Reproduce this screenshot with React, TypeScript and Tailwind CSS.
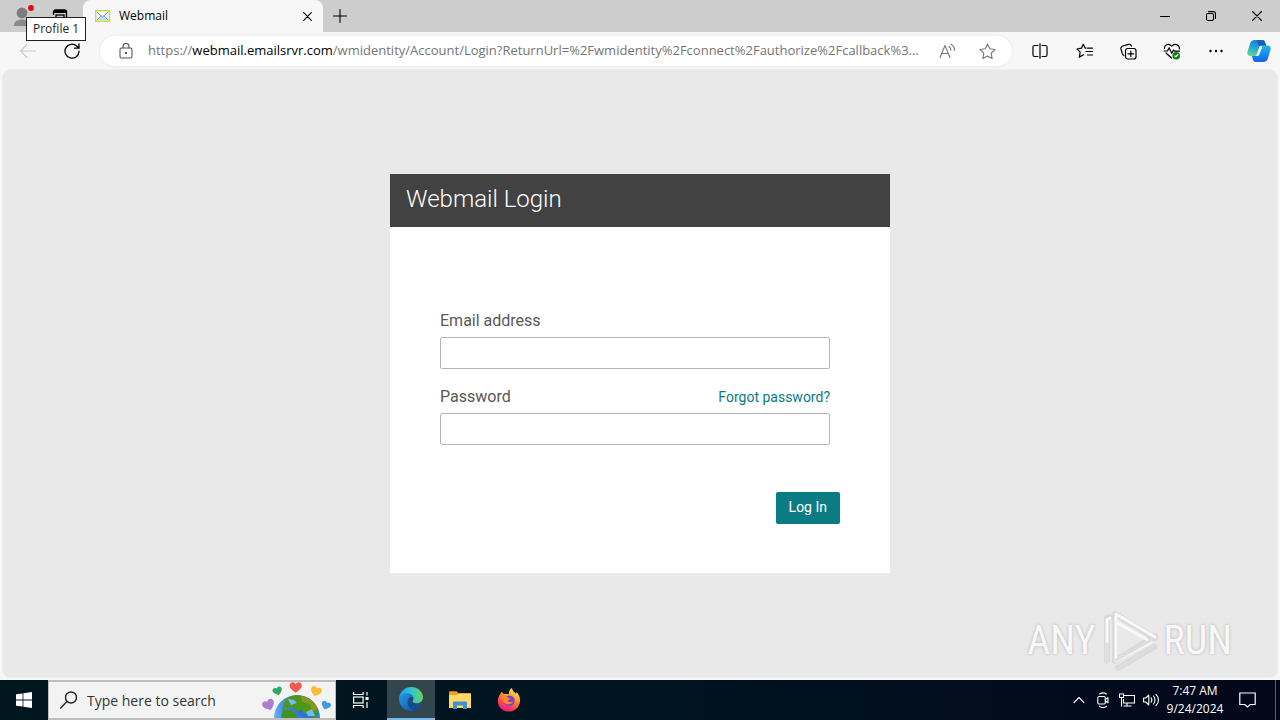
import type { ReactNode } from "react";

function IconButton({ label, className, children }: { label: string; className: string; children: ReactNode }) {
  return (
    <button type="button" aria-label={label} className={`flex shrink-0 items-center justify-center ${className}`}>
      {children}
    </button>
  );
}

const line = { fill: "none", stroke: "currentColor", strokeWidth: 1.1, strokeLinecap: "round", strokeLinejoin: "round" } as const;

function TabStrip() {
  return (
    <header className="relative flex h-8 shrink-0 bg-[#cdcdcd]">
      <IconButton label="Profile 1" className="w-11">
        <svg width="28" height="24" viewBox="-3 0 28 24">
          <circle cx="11" cy="9" r="5.400" fill="#7d7d7d" />
          <path d="M3 22c0-4.500 3-6.500 8-6.500s8 2 8 6.500z" fill="#8b8b8b" />
          <circle cx="20" cy="4" r="2.900" fill="#e30613" />
        </svg>
      </IconButton>
      <IconButton label="Workspaces" className="w-8">
        <svg width="16" height="16" viewBox="0 0 16 16" fill="none" stroke="#000">
          <path d="M1.500 7V4a2 2 0 0 1 2-2h9a2 2 0 0 1 2 2v9" strokeWidth="1.300" />
          <path d="M2 3.500h12" strokeWidth="3" />
          <rect x="4" y="7" width="8" height="7" strokeWidth="1.300" />
        </svg>
      </IconButton>
      <div className="ml-[7px] flex w-60 items-center rounded-t-lg bg-[#f7f7f7] pr-2 pl-3">
        <svg className="shrink-0" width="15" height="12" viewBox="0 0 15 12">
          <rect x=".7" y=".7" width="13.600" height="10.600" fill="#f4f9ff" stroke="#c9db35" strokeWidth="1.400" />
          <path d="M2 10.300 5.700 6h3.600l3.700 4.300z" fill="#bcdcf5" />
          <path d="M2 2l5.500 5L13 2M2 10l4-4.300M13 10 9 5.700" fill="none" stroke="#7899c4" />
        </svg>
        <span className="ml-[9px] flex-1 text-[12px]">Webmail</span>
        <IconButton label="Close tab" className="size-4">
          <svg width="9" height="9" viewBox="0 0 9 9" {...line}>
            <path d="m.7.700 7.600 7.600m0-7.600L.7 8.300" />
          </svg>
        </IconButton>
      </div>
      <IconButton label="New tab" className="w-[34px]">
        <svg width="14" height="14" viewBox="0 0 14 14" {...line}>
          <path d="M7 .5v13M.5 7h13" />
        </svg>
      </IconButton>
      <div className="flex-1" />
      <IconButton label="Minimize" className="w-[46px]">
        <svg width="10" height="10" viewBox="0 0 10 10" {...line}>
          <path d="M.5 5.500h9" />
        </svg>
      </IconButton>
      <IconButton label="Restore" className="w-[46px]">
        <svg width="10" height="10" viewBox="0 0 10 10" {...line}>
          <rect x=".5" y="2.500" width="7" height="7" rx="1.500" />
          <path d="M2.500.600H7.500a2 2 0 0 1 2 2V7.500" />
        </svg>
      </IconButton>
      <IconButton label="Close" className="w-[46px]">
        <svg width="10" height="10" viewBox="0 0 10 10" {...line}>
          <path d="m.5.500 9 9m0-9-9 9" />
        </svg>
      </IconButton>
      <div role="tooltip" className="absolute top-[17px] left-[26px] z-10 border border-[#202020] bg-white px-[6px] text-[12px] leading-[22px] whitespace-nowrap text-[#222]">
        Profile 1
      </div>
    </header>
  );
}

const starPath = "m8.500 1 2.300 4.800 5.200.700-3.800 3.700.900 5.300-4.600-2.500-4.600 2.500.900-5.300L1 6.500l5.200-.700z";

function Toolbar() {
  return (
    <nav className="flex h-[38px] shrink-0 items-center">
      <IconButton label="Back" className="ml-[6px] h-8 w-11 text-[#c9c9c9]">
        <svg width="16" height="16" viewBox="0 0 16 16" {...line}>
          <path d="M15.500 8H.7M7 1.500.7 8 7 14.500" />
        </svg>
      </IconButton>
      <IconButton label="Refresh" className="h-8 w-11">
        <svg width="16" height="16" viewBox="0 0 16 16" {...line} strokeWidth="1.300">
          <path d="M15 8.200A7 7 0 1 1 12.700 3L15 5.200M15 .8v4.400h-4.500" />
        </svg>
      </IconButton>
      <div className="mx-[6px] flex h-[30px] min-w-0 flex-1 items-center rounded-full bg-white shadow-[0_0_3px_#e2e2e2]">
        <IconButton label="View site information" className="ml-1 h-7 w-11 text-[#555]">
          <svg width="14" height="16" viewBox="0 0 14 16" {...line}>
            <rect x="1" y="5" width="12" height="10" rx="1.500" />
            <path d="M4 5V3.500a3 3 0 0 1 6 0V5" />
            <circle cx="7" cy="10" r=".6" fill="currentColor" />
          </svg>
        </IconButton>
        <div className="min-w-0 flex-1 text-[13px] whitespace-nowrap text-[#767676]">
          https://<span className="text-black">webmail.emailsrvr.com</span>/wmidentity/Account/Login?ReturnUrl=%2Fwmidentity%2Fconnect%2Fauthorize%2Fcallback%3...
        </div>
        <IconButton label="Read aloud" className="h-7 w-9 text-[#777]">
          <svg width="17" height="16" viewBox="0 0 17 16" {...line}>
            <path d="M1 14.500 6 2.500l5 12M2.700 10.500h6.600M10 3.500c1.200.9 1.900 2.200 1.900 3.700M12 1c2.300 1.500 3.600 3.800 3.600 6.500" />
          </svg>
        </IconButton>
        <IconButton label="Add to favorites" className="mr-[3px] h-7 w-11 text-[#777]">
          <svg width="17" height="17" viewBox="0 0 17 17" {...line}>
            <path d={starPath} />
          </svg>
        </IconButton>
      </div>
      <IconButton label="Split screen" className="h-8 w-11">
        <svg width="16" height="16" viewBox="0 0 16 16" {...line} strokeWidth="1.200">
          <path d="M6 2.500H2.500A1.500 1.500 0 0 0 1 4v8a1.500 1.500 0 0 0 1.500 1.500H6M10 2.500h3.500A1.500 1.500 0 0 1 15 4v8a1.500 1.500 0 0 1-1.500 1.500H10M8 .7v14.600" />
        </svg>
      </IconButton>
      <IconButton label="Favorites" className="h-8 w-11">
        <svg width="17" height="16" viewBox="0 0 17 16" {...line} strokeWidth="1.200">
          <path d="M10 5.200 9.100 5 7.300 1.300 5.400 5.200 1 6l3.200 3.200-.9 4.900 4.300-2.300M11.500 5.200h5M10 8.500h6.500M11.500 12h5" />
        </svg>
      </IconButton>
      <IconButton label="Collections" className="h-8 w-11">
        <svg width="17" height="17" viewBox="0 0 17 17" {...line} strokeWidth="1.200">
          <path d="M3.800 12.500A3 3 0 0 1 2.300 10.700L1 6a2.500 2.500 0 0 1 1.800-3L8.500 1.400a2.500 2.500 0 0 1 3 1.800" />
          <rect x="5.500" y="5.500" width="10.500" height="10.500" rx="2.200" />
          <path d="M10.800 8v5.500M8 10.800h5.600" />
        </svg>
      </IconButton>
      <IconButton label="Browser essentials" className="h-8 w-11">
        <svg width="18" height="17" viewBox="0 0 18 17" {...line} strokeWidth="1.200">
          <path d="M1.500 5.500C1 2 5.500-.2 8.700 3.200 12-.2 17 2 16.300 6M3 10l5.500 5M1 8h3.500l1.600-3.200 2.700 5.400L10.500 7l1 1.200h5" />
          <circle cx="13.200" cy="12.700" r="3.800" fill="#107c10" stroke="none" />
          <path d="m11.800 12.900 1 1 2-2.200" stroke="#fff" />
        </svg>
      </IconButton>
      <IconButton label="Settings and more" className="h-8 w-11">
        <svg width="14" height="4" viewBox="0 0 14 4">
          <circle cx="1.500" cy="2" r="1.200" />
          <circle cx="7" cy="2" r="1.200" />
          <circle cx="12.500" cy="2" r="1.200" />
        </svg>
      </IconButton>
      <IconButton label="Copilot" className="h-8 w-[42px]">
        <svg width="24" height="22" viewBox="0 0 24 22">
          <defs>
            <linearGradient id="copilotA" x1=".6" y1="0" x2=".2" y2="1">
              <stop offset="0" stopColor="#1b78d2" />
              <stop offset=".5" stopColor="#25a7d6" />
              <stop offset="1" stopColor="#5fd68f" />
            </linearGradient>
            <linearGradient id="copilotB" x1=".5" y1="0" x2=".4" y2="1">
              <stop offset="0" stopColor="#1cb6ee" />
              <stop offset="1" stopColor="#1560ec" />
            </linearGradient>
          </defs>
          <path d="M8 0h7c2 0 2.800 1.300 3.300 3l.8 2.500h-4c-2 0-2.700 1-3.300 3l-2 5.500c-.7 1.800-1.500 2-3.300 2H3.600C1 16-.2 14.500.5 11.800L3.300 3C4.200.800 5.500 0 8 0z" fill="url(#copilotA)" />
          <path d="M16 22H9c-2 0-2.800-1.300-3.300-3L5 16h3.500c2 0 2.700-1 3.300-3l2-5.500c.7-1.800 1.500-2 3.300-2h3.300c2.600 0 3.800 1.500 3.100 4.200L20.700 19c-.9 2.200-2.200 3-4.700 3z" fill="url(#copilotB)" />
          <path d="M10 0h5c2 0 2.800 1.300 3.300 3l.8 2.500h-4c-1.500 0-2.300.5-2.800 1.700z" fill="#1660b8" />
          <path d="m12.500 6.300 3 .2-3.700 9.200-3 .1c1.500-.2 2-1.500 2.500-3z" fill="#f2fbff" />
        </svg>
      </IconButton>
    </nav>
  );
}

function LoginCard() {
  const field = "mt-1 block h-8 w-full rounded-xs border border-[#b5b5b5] bg-white px-2 text-[16px] outline-none";
  return (
    <form className="w-[500px] max-w-full bg-white font-['Roboto',sans-serif]" onSubmit={(e) => e.preventDefault()}>
      <h1 className="h-[53px] bg-[#424242] px-4 text-[24px] leading-[50px] font-light text-white">Webmail Login</h1>
      <div className="pt-[82px] pr-[60px] pl-[50px] leading-6 text-[#585858]">
        <label htmlFor="email" className="block text-[16px]">Email address</label>
        <input id="email" type="email" className={field} />
        <div className="mt-4 flex items-baseline justify-between text-[16px]">
          <label htmlFor="password">Password</label>
          <a href="#forgot" className="text-[14px] text-[#0b7b82]">Forgot password?</a>
        </div>
        <input id="password" type="password" className={field} />
      </div>
      <div className="flex justify-end pt-[47px] pr-[50px] pb-[49px]">
        <button type="submit" className="h-8 rounded-xs bg-[#0c7c84] px-[13px] pb-[2px] text-[14px] text-white">Log In</button>
      </div>
    </form>
  );
}

function Watermark() {
  return (
    <div className="absolute right-[45px] bottom-[4px] flex items-center font-['Roboto_Condensed','Open_Sans_Condensed_Light','Noto_Sans_ExtraCondensed','Liberation_Sans_Narrow',sans-serif] text-[40px] leading-[64px] text-[#f8f8f8] [text-shadow:0_0_3px_#adadad]">
      <span>ANY</span>
      <svg className="mx-1" width="60" height="64" viewBox="0 0 60 64" fill="none" strokeLinejoin="round" strokeLinecap="round">
        <g stroke="#cfcfcf" strokeWidth="6" opacity=".6">
          <path d="M7 52V9l3-1M15 52V5l40 24M15 52l40-25M18 59l36-21" />
        </g>
        <g stroke="#f9f9f9" strokeWidth="3">
          <path d="M7 54V11l3-2M16 51V5l39 23M16 13l35 20-35 19" />
        </g>
        <path d="M7 54V35M16 51l37-21M17 60l36-22" stroke="#dedede" strokeWidth="3" />
      </svg>
      <span>RUN</span>
    </div>
  );
}

const heart = "M8 14C2 10 0 7 1 4c1-3 5-3.500 7-.5C10 .5 14 1 15 4c1 3-1 6-7 10z";

function SearchArt() {
  return (
    <svg className="shrink-0 self-end" width="74" height="37" viewBox="0 0 74 37">
      <defs>
        <radialGradient id="sea" cx=".7" cy=".3" r=".9">
          <stop offset="0" stopColor="#2468c9" />
          <stop offset=".55" stopColor="#3f8fea" />
          <stop offset="1" stopColor="#9cc8ff" />
        </radialGradient>
      </defs>
      <circle cx="36" cy="37" r="23" fill="url(#sea)" />
      <path d="M23 21c4-5 11-8 18-6 8 1 13 7 16 14l-2 8h-3l-4-5-5 1-2-4-5 1-4-4-7 1-4 2z" fill="#4f961b" />
      <path d="M40 15c8 1 14 6 17 13l-5 2-4-7-7-2z" fill="#84991d" />
      <path d="M22 29c5-2 11 0 14 5l-1 3H20z" fill="#43921d" />
      <path d="m27 18 6 1 3 3-6 2zM45 31l6-3 3 7h-7z" fill="#6fbdf2" />
      <path d={heart} transform="translate(28 0) scale(.84)" fill="#f05b4f" />
      <path d={heart} transform="translate(10 7) rotate(-18) scale(.66)" fill="#31a867" />
      <path d={heart} transform="translate(51 3) rotate(18) scale(.76)" fill="#f6bd38" />
      <path d={heart} transform="translate(-1 21) rotate(-25) scale(.84)" fill="#ae7dcd" />
      <path d={heart} transform="translate(62 18) rotate(22) scale(.64)" fill="#3c9be2" />
    </svg>
  );
}

function Taskbar() {
  return (
    <footer className="flex h-10 shrink-0 bg-linear-to-r from-[#00171f] via-[#001420] to-[#020719] text-white">
      <IconButton label="Start" className="w-12">
        <svg width="16" height="16" viewBox="0 0 16 16" fill="#fff">
          <path d="M0 2.300 6.600 1.400V7.600H0zM7.400 1.300 16 0V7.600H7.400zM0 8.400H6.600V14.600L0 13.700zM7.400 8.400H16V16L7.400 14.700z" />
        </svg>
      </IconButton>
      <label className="flex w-72 items-center border border-t-2 border-b-2 border-[#bdbdbd] bg-[#f3f3f3] pl-[11px] text-[#222]">
        <svg className="shrink-0" width="18" height="18" viewBox="0 0 18 18" {...line} strokeWidth="1.400">
          <circle cx="11" cy="6.500" r="5.500" />
          <path d="m7 10.500-6.300 6.500" />
        </svg>
        <input aria-label="Search" placeholder="Type here to search" className="ml-[9px] h-full w-0 min-w-0 flex-1 bg-transparent text-[14px] outline-none placeholder:text-[#333] placeholder:opacity-100" />
        <SearchArt />
      </label>
      <IconButton label="Task View" className="w-[50px]">
        <svg width="16" height="16" viewBox="0 0 16 16" fill="none" stroke="#fff" strokeWidth="1.200">
          <path d="M.6 0v2.500h9.500V0M.6 16v-2.500h9.500V16M14 0v3.500M14 10v6" />
          <rect x=".6" y="5" width="9.500" height="6" />
          <rect x="12.500" y="5" width="3" height="3" fill="#fff" stroke="none" />
        </svg>
      </IconButton>
      <IconButton label="Microsoft Edge" className="ml-px w-12 border-b-2 border-[#76b9ed] bg-[#33464d]">
        <svg width="24" height="24" viewBox="0 0 24 24">
          <defs>
            <linearGradient id="edgeTop" x1="0" y1=".5" x2="1" y2=".4">
              <stop offset="0" stopColor="#1b9be2" />
              <stop offset=".5" stopColor="#31c2dc" />
              <stop offset="1" stopColor="#65d757" />
            </linearGradient>
            <linearGradient id="edgeLow" x1="0" y1="0" x2="1" y2="1">
              <stop offset="0" stopColor="#219ae4" />
              <stop offset="1" stopColor="#0c58a8" />
            </linearGradient>
          </defs>
          <path d="M0 11.500C.7 4.500 6 0 12.200 0 19 0 24 5 24 10.300c0 3.700-2.700 6-6 6-2.500 0-4.500-.9-4.500-1.800 0-.7 1-1.100 1-3C14.500 8.700 12 7 8.500 7 4.500 7 1.500 9 0 11.500z" fill="url(#edgeTop)" />
          <path d="M0 11.500C1 8 5 6 8.500 6.200c3.700.3 6 2.500 6 5.300-.6-1-1.500-1.500-2.500-1.500-2 .8-3.300 2.700-3.300 5 0 4.500 3.500 7.800 7.800 8A12 12 0 0 1 0 11.500z" fill="url(#edgeLow)" />
          <path d="M8.700 15c0-2.500 1.500-4.400 3.300-5-1 1.700-.4 4.300 1.500 5.700 2.700 2 6.500 1.700 9.300.2.400-.2.600.2.400.600-1.500 3.500-4.200 6.200-7.700 6.500-4-.3-6.800-3.800-6.800-8z" fill="#144b91" />
        </svg>
      </IconButton>
      <IconButton label="File Explorer" className="w-[50px]">
        <svg width="22" height="18" viewBox="0 0 22 18">
          <path d="M0 1.500C0 .7.500.3 1.200.3h6.300l2 2H21c.6 0 1 .4 1 1V16H0z" fill="#e3a325" />
          <path d="M0 4h8l2-1.500h12V17H0z" fill="#ffd867" />
          <path d="M4 18v-6.200c0-.8.500-1.300 1.300-1.300h11.400c.8 0 1.300.5 1.300 1.300V18h-4v-3.500H8V18z" fill="#3d93cf" />
        </svg>
      </IconButton>
      <IconButton label="Firefox" className="w-12">
        <svg width="24" height="24" viewBox="0 0 24 24">
          <defs>
            <linearGradient id="fox" x1=".8" y1="0" x2=".3" y2="1">
              <stop offset="0" stopColor="#fff14f" />
              <stop offset=".4" stopColor="#ff9a2c" />
              <stop offset=".75" stopColor="#ff4050" />
              <stop offset="1" stopColor="#e31587" />
            </linearGradient>
          </defs>
          <path d="M5 4c.5 1 1.200 1.700 2 2 1.600-.6 3.500-.4 5 .3C11.500 3.500 13 1 15 0c0 2.500 2.500 4 4 5.800L19.500 4C22 6.500 23.200 9.300 23 13c-.4 6-5 10.600-11.200 10.600C5.500 23.600.8 19 .8 13c0-2.800 1-5.200 2.500-6.800C3.500 5.200 4.200 4.300 5 4z" fill="url(#fox)" />
          <circle cx="12.500" cy="12.700" r="5.200" fill="#7942cf" />
          <path d="M4 9c2.500-1.500 5-1 7 .8l2.300.6c-.2 1.300-2.500 1.500-3 2.600 1.500 1.500 4 1.500 6 .8-1.500 3-7 3.500-9.300.2C5.700 12.500 5 10.500 4 9z" fill="#ff8a26" />
        </svg>
      </IconButton>
      <div className="flex-1" />
      <IconButton label="Show hidden icons" className="w-6">
        <svg width="12" height="8" viewBox="0 0 12 8" {...line}><path d="M1 6.700 6 1.500l5 5.200" /></svg>
      </IconButton>
      <IconButton label="Meet Now" className="w-6">
        <svg width="12" height="16" viewBox="0 0 12 16" {...line}>
          <rect x=".8" y="4.500" width="7.500" height="7.500" rx="1.200" />
          <path d="m8.300 7.500 2.700-1.800v5L8.300 9M2.500 2c2-1.300 5-1.300 7 0M2.500 14.400c2 1.300 5 1.300 7 0" />
        </svg>
      </IconButton>
      <IconButton label="Network" className="w-6">
        <svg width="16" height="14" viewBox="0 0 16 14" fill="none" stroke="#fff" strokeWidth="1.100">
          <path d="M5 2.500h10.500v7.500H4.500V6M8 10v3M4.500 13h8M2.500 6v7.500" />
          <path d="M.5 1h4v3.500h-4zM2.500 4.500V6" />
        </svg>
      </IconButton>
      <IconButton label="Volume" className="w-6">
        <svg width="17" height="14" viewBox="0 0 17 14" {...line}>
          <path d="M.6 5v4h2.200l3 3V2l-3 3zM8 4.800c1 1.200 1 3.200 0 4.400M10.500 3c2 2.200 2 5.800 0 8M13 1.300c3.300 3.200 3.300 8.200 0 11.400" />
        </svg>
      </IconButton>
      <button type="button" className="w-16 text-[12px] leading-[18px] whitespace-nowrap">
        7:47 AM<br />9/24/2024
      </button>
      <IconButton label="Notifications" className="w-10">
        <svg width="17" height="16" viewBox="0 0 17 16" fill="none" stroke="#fff" strokeWidth="1.200">
          <path d="M.8 1h15.400v11.500h-5L8.500 15l-2.700-2.500h-5z" />
        </svg>
      </IconButton>
      <button type="button" aria-label="Show desktop" className="ml-2 w-[5px] border-l border-[#5a6069]" />
    </footer>
  );
}

export default function App() {
  return (
    <div className="flex min-h-screen flex-col bg-[#f7f7f7] font-['Open_Sans','Noto_Sans',sans-serif] text-black">
      <TabStrip />
      <Toolbar />
      <main className="relative mx-[3px] mb-[3px] flex flex-1 items-center justify-center rounded-lg bg-[#e9e9e9] shadow-[0_0_2px_#d8d8d8]">
        <LoginCard />
        <Watermark />
      </main>
      <Taskbar />
    </div>
  );
}
